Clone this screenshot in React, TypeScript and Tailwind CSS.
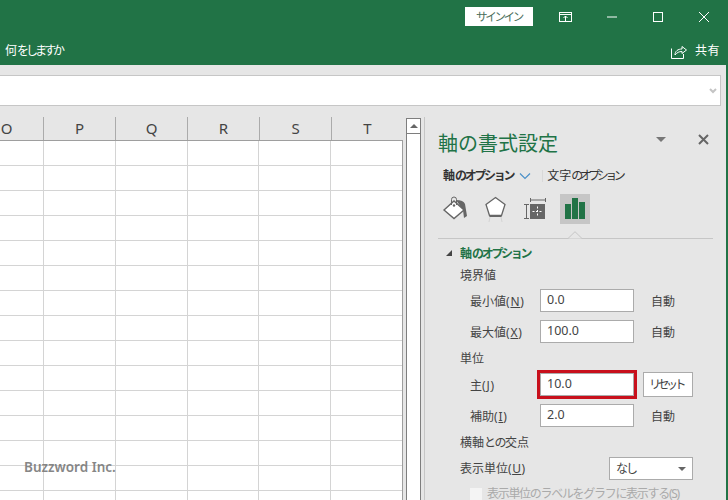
const font = { fontFamily: '"Noto Sans", "Noto Sans CJK JP", sans-serif' };

const cols = ["O", "P", "Q", "R", "S", "T"];
const widths = ["w-[44px]", "w-[72px]", "w-[72px]", "w-[72px]", "w-[72px]", "w-[71px]"];

function Sheet() {
  return (
    <div className="w-[403px] flex flex-col">
      <div className="h-[23px] flex items-stretch border-b border-[#9e9e9e] box-content">
        {cols.map((c, i) => (
          <div key={c} className={`${widths[i]} flex items-center justify-center text-[15px] text-[#444] border-r border-[#ababab] ${i === 0 ? "pr-[30px]" : ""} ${i === 5 ? "border-r-0" : ""}`}>
            {c}
          </div>
        ))}
      </div>
      <div className="flex-1 bg-white border-r border-[#9e9e9e] overflow-hidden">
        {Array.from({ length: 15 }).map((_, r) => (
          <div key={r} className="h-[25px] flex border-b border-[#d4d4d4]">
            {cols.map((c, i) => (
              <div key={c} className={`${widths[i]} border-r border-[#d4d4d4] ${i === 5 ? "border-r-0" : ""}`} />
            ))}
          </div>
        ))}
      </div>
    </div>
  );
}

function Field({ label, accel, value, after, red }: { label: string; accel: string; value: string; after: React.ReactNode; red?: boolean }) {
  return (
    <div className="flex items-center h-[23px] pl-[32px]">
      <div className="w-[70px] text-[12px] text-[#444] whitespace-nowrap pt-[2px]">
        {label}<span className="tracking-[0.8px]">(<span className="underline">{accel}</span>)</span>
      </div>
      <div className={`w-[94px] h-[23px] bg-white border border-[#ababab] pl-[6px] flex items-center text-[12.5px] text-[#444] ${red ? "outline-[3px] outline-[#c8101c]" : ""}`}>
        {value}
      </div>
      {after}
    </div>
  );
}

const Auto = () => <div className="ml-[17px] text-[12px] text-[#444] pt-[2px]">自動</div>;

const AxisOptions = () => (
  <span className="whitespace-nowrap">軸<span className="tracking-[-2.3px]">のオプション</span></span>
);

export default function App() {
  return (
    <div style={font} className="w-[728px] h-[500px] overflow-hidden bg-[#e6e6e6] flex flex-col relative border-r-2 border-[#217346]">
      <div className="h-[65px] shrink-0 bg-[#217346] flex flex-col text-white">
        <div className="h-[33px] flex items-center justify-end">
          <div className="w-[68px] h-[19px] bg-white text-[#4a6e5a] text-[11.5px] tracking-[-2.3px] flex items-center justify-center mr-[24px]">サインイン</div>
          <svg width="16" height="14" viewBox="0 0 16 14" className="mr-[33px]" fill="none" stroke="#fff" strokeWidth="1">
            <rect x="2.5" y="2.5" width="12" height="9" />
            <path d="M2.5 4.5h12M8.5 11V6M6.500 8l2-2 2 2" />
          </svg>
          <svg width="12" height="12" viewBox="0 0 12 12" className="mr-[34px]" stroke="#fff" strokeWidth="1"><path d="M1 6h10" /></svg>
          <svg width="12" height="12" viewBox="0 0 12 12" className="mr-[34px]" fill="none" stroke="#fff" strokeWidth="1"><rect x="1.5" y="1.5" width="9" height="9" /></svg>
          <svg width="12" height="12" viewBox="0 0 12 12" className="mr-[16px]" fill="none" stroke="#fff" strokeWidth="1"><path d="M1 1l10 10M11 1L1 11" /></svg>
        </div>
        <div className="flex-1 flex items-center pl-[5px] pt-[4px]">
          <span className="text-[12px]">何<span className="tracking-[-3px]">をしますか</span></span>
          <div className="ml-auto flex items-center pr-[6px]">
            <svg width="16" height="15" viewBox="0 0 16 15" fill="none" stroke="#fff" strokeWidth="1" className="mr-[8px]">
              <path d="M.5 4.500v10h12V10" />
              <path d="M4 11c0-4 3-6 7-6V2.500L15.500 6 11 9.500V7.500c-3 0-5 1-7 3.500z" />
            </svg>
            <span className="text-[12px] tracking-[0.5px]">共有</span>
          </div>
        </div>
      </div>

      <div className="h-[10px] shrink-0" />

      <div className="h-[31px] shrink-0 mr-[5px] bg-white border-y border-r border-[#c6c6c6] flex items-center justify-end pr-[2px]">
        <svg width="10" height="8" viewBox="0 0 10 8" fill="none" stroke="#c4c4c4" strokeWidth="2"><path d="M2 2l3 3 3-3" /></svg>
      </div>

      <div className="flex-1 flex min-h-0 pt-[11px]">
        <Sheet />

        <div className="w-[15px] ml-[3px] mt-[1px] flex flex-col border-x border-[#7e7e7e] bg-white">
          <div className="h-[16px] border-y border-[#7e7e7e] flex items-center justify-center">
            <div className="w-0 h-0 border-x-[4px] border-x-transparent border-b-[4px] border-b-[#666]" />
          </div>
        </div>

        <div className="ml-[3px] flex-1 border-l border-[#c6c6c6] pl-[13px] pr-[5px] min-w-0 flex flex-col [&>*]:shrink-0">
          <div className="flex items-center h-[27px] mt-[12px] pt-[3px]">
            <span className="text-[20px] text-[#217346] leading-none">軸の書式設定</span>
            <div className="ml-auto w-0 h-0 border-x-[5px] border-x-transparent border-t-[5px] border-t-[#777] mr-[32px] mb-[10px]" />
            <svg width="11" height="11" viewBox="0 0 11 11" stroke="#666" strokeWidth="2" className="mr-[12px] mb-[10px]"><path d="M1 1l9 9M10 1l-9 9" /></svg>
          </div>
          <div className="flex items-center h-[24px] mt-[7px] pl-[5px] pt-[2px] text-[12px] text-[#333]">
            <span className="font-bold"><AxisOptions /></span>
            <svg width="12" height="8" viewBox="0 0 12 8" fill="none" stroke="#4a90c8" strokeWidth="1.2" className="ml-[6px] mr-[11px]"><path d="M1 1.500l5 5 5-5" /></svg>
            <div className="w-px h-[12px] bg-[#d8d8d8] mr-[4px]" />
            <span className="whitespace-nowrap">文字<span className="tracking-[-3.5px]">のオプション</span></span>
          </div>
          <div className="flex items-center h-[30px] mt-[7px]">
            <svg width="30" height="30" viewBox="0 0 30 30" className="ml-[3px]" fill="none">
              <path d="M15 6c5 0 8 1.500 9 4l2 12-3 2-1-8z" fill="#666" />
              <path d="M3 16l10-9 10 9-10 8.500z" fill="#fff" stroke="#666" strokeWidth="1.4" />
              <path d="M10.500 11V5.500a2.500 2.500 0 0 1 5 0V11" stroke="#666" strokeWidth="1" />
              <circle cx="13" cy="11.500" r="1.200" fill="#666" />
            </svg>
            <svg width="30" height="30" viewBox="0 0 30 30" className="ml-[10px]" fill="none">
              <path d="M14.500 3.500l9.500 7-3.500 11h-12L5 10.500z" fill="#fff" stroke="#666" strokeWidth="1.3" />
              <path d="M8.500 22h12" stroke="#666" strokeWidth="2" />
              <path d="M8 28l1-5M21 28l-1-5" stroke="#d4d4d4" strokeWidth="1" />
            </svg>
            <svg width="30" height="30" viewBox="0 0 30 30" className="ml-[10px]" fill="none">
              <path d="M9.500 6h15M9.500 4v4M24.500 4v4M3 10.500h5M3 24.500h5M5.500 10.500v14" stroke="#666" strokeWidth="1" />
              <rect x="9" y="10" width="15" height="15" fill="#666" />
              <path d="M16.500 12.500v10M11.500 17.500h10" stroke="#fff" strokeWidth="1" strokeDasharray="2 1.500" />
            </svg>
            <div className="ml-[9px] w-[30px] h-[30px] bg-[#c6c6c6] flex items-end justify-center pb-[5px] gap-[1px]">
              <div className="w-[6px] h-[15px] bg-[#217346]" />
              <div className="w-[6px] h-[21px] bg-[#217346]" />
              <div className="w-[6px] h-[17px] bg-[#217346]" />
            </div>
          </div>
          <div className="h-[15px] relative border-b border-[#c6c6c6] mb-[1px] mr-[8px]">
            <svg width="16" height="8" viewBox="0 0 16 8" className="absolute left-[129px] bottom-[-1px]" fill="#e6e6e6" stroke="#c6c6c6" strokeWidth="1"><path d="M0 7.500h1L8 .7l7 6.800h1" /></svg>
          </div>
          <div className="flex items-center h-[22px] mt-[2px] pl-[8px] pt-[2px] text-[12px] font-bold text-[#217346]">
            <div className="w-0 h-0 border-l-[6px] border-l-transparent border-b-[6px] border-b-[#444] mr-[8px] mb-[2px]" />
            <AxisOptions />
          </div>
          <div className="text-[12px] text-[#444] pl-[22px] h-[20px] leading-[24px]">境界値</div>
          <div className="flex flex-col gap-[8px] mt-[5px]">
            <Field label="最小値" accel="N" value="0.0" after={<Auto />} />
            <Field label="最大値" accel="X" value="100.0" after={<Auto />} />
          </div>
          <div className="text-[12px] text-[#444] pl-[22px] h-[20px] mt-[5px] leading-[22px]">単位</div>
          <div className="flex flex-col gap-[8px] mt-[5px]">
            <Field label="主" accel="J" value="10.0" red after={
              <div className="ml-[9px] w-[50px] h-[25px] bg-white border border-[#ababab] text-[12px] tracking-[-3.5px] text-[#444] flex items-center justify-center pr-[4px]">リセット</div>
            } />
            <Field label="補助" accel="I" value="2.0" after={<Auto />} />
          </div>
          <div className="text-[12px] text-[#444] pl-[22px] h-[20px] mt-[5px] leading-[22px] whitespace-nowrap">横軸<span className="tracking-[-1.5px]">との</span>交点</div>
          <div className="flex items-center h-[23px] mt-[5px] pl-[22px]">
            <div className="w-[149px] text-[12px] text-[#444]">表示単位<span className="tracking-[0.5px]">(<span className="underline">U</span>)</span></div>
            <div className="w-[84px] h-[23px] bg-white border border-[#ababab] pl-[6px] pr-[6px] flex items-center text-[12px] text-[#444]">
              <span className="tracking-[-2px]">なし</span>
              <div className="ml-auto w-0 h-0 border-x-[4px] border-x-transparent border-t-[4px] border-t-[#666]" />
            </div>
          </div>
          <div className="flex items-center h-[20px] mt-[3px] pl-[32px] pt-[2px]">
            <div className="w-[12px] h-[12px] bg-[#f4f4f4] mr-[5px]" />
            <span className="text-[12px] text-[#aaa] whitespace-nowrap tracking-[-1.300px]">表示単位のラベルをグラフに表示する(S)</span>
          </div>
        </div>
      </div>

      <div className="absolute left-[24px] top-[457px] text-[13.5px] font-semibold text-[#7a7a7a] opacity-90">Buzzword Inc.</div>
    </div>
  );
}
